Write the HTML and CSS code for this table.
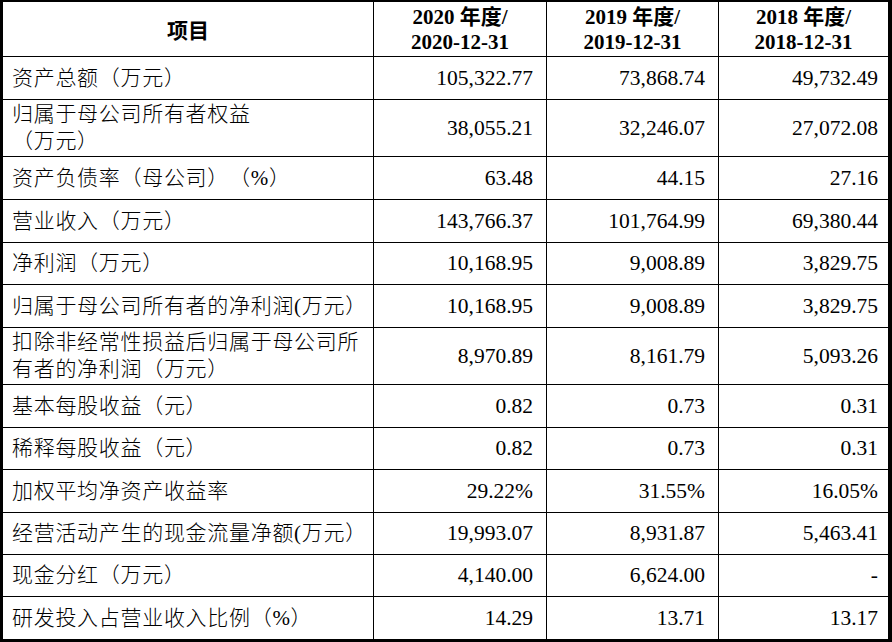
FILE: index.html
```html
<!DOCTYPE html>
<html lang="zh-CN">
<head>
<meta charset="utf-8">
<title>主要财务数据</title>
<link rel="stylesheet" href="styles.css">
</head>
<body>
<div class="sheet">
  <div class="cell head item">项目</div>
  <div class="cell head year">2020 年度/<br>2020-12-31</div>
  <div class="cell head year">2019 年度/<br>2019-12-31</div>
  <div class="cell head year">2018 年度/<br>2018-12-31</div>

  <div class="cell label">资产总额（万元）</div>
  <div class="cell num">105,322.77</div>
  <div class="cell num">73,868.74</div>
  <div class="cell num last">49,732.49</div>

  <div class="cell label">归属于母公司所有者权益<br>（万元）</div>
  <div class="cell num">38,055.21</div>
  <div class="cell num">32,246.07</div>
  <div class="cell num last">27,072.08</div>

  <div class="cell label">资产负债率（母公司）（%）</div>
  <div class="cell num">63.48</div>
  <div class="cell num">44.15</div>
  <div class="cell num last">27.16</div>

  <div class="cell label">营业收入（万元）</div>
  <div class="cell num">143,766.37</div>
  <div class="cell num">101,764.99</div>
  <div class="cell num last">69,380.44</div>

  <div class="cell label">净利润（万元）</div>
  <div class="cell num">10,168.95</div>
  <div class="cell num">9,008.89</div>
  <div class="cell num last">3,829.75</div>

  <div class="cell label">归属于母公司所有者的净利润(万元）</div>
  <div class="cell num">10,168.95</div>
  <div class="cell num">9,008.89</div>
  <div class="cell num last">3,829.75</div>

  <div class="cell label">扣除非经常性损益后归属于母公司所<br>有者的净利润（万元）</div>
  <div class="cell num">8,970.89</div>
  <div class="cell num">8,161.79</div>
  <div class="cell num last">5,093.26</div>

  <div class="cell label">基本每股收益（元）</div>
  <div class="cell num">0.82</div>
  <div class="cell num">0.73</div>
  <div class="cell num last">0.31</div>

  <div class="cell label">稀释每股收益（元）</div>
  <div class="cell num">0.82</div>
  <div class="cell num">0.73</div>
  <div class="cell num last">0.31</div>

  <div class="cell label">加权平均净资产收益率</div>
  <div class="cell num">29.22%</div>
  <div class="cell num">31.55%</div>
  <div class="cell num last">16.05%</div>

  <div class="cell label">经营活动产生的现金流量净额(万元）</div>
  <div class="cell num">19,993.07</div>
  <div class="cell num">8,931.87</div>
  <div class="cell num last">5,463.41</div>

  <div class="cell label">现金分红（万元）</div>
  <div class="cell num">4,140.00</div>
  <div class="cell num">6,624.00</div>
  <div class="cell num last">-</div>

  <div class="cell label">研发投入占营业收入比例（%）</div>
  <div class="cell num">14.29</div>
  <div class="cell num">13.71</div>
  <div class="cell num last">13.17</div>
</div>
</body>
</html>
```

FILE: styles.css
```css
html, body {
  margin: 0;
  padding: 0;
  background: #ffffff;
}

.sheet {
  width: 892px;
  height: 642px;
  box-sizing: border-box;
  border-style: solid;
  border-color: #000;
  border-width: 2px 4px 3px 3px;
  background: #000;
  display: grid;
  grid-template-columns: 370px 172px 171px 169px;
  grid-template-rows: 54px 42px 56px 42px 42px 41px 42px 56px 42px 41px 42px 41px 41px 42px;
  gap: 1px;
  font-family: "Liberation Serif", "Noto Sans CJK SC", serif;
  color: #000;
  text-spacing-trim: space-all;
}

.cell {
  background: #fff;
  display: flex;
  align-items: center;
  white-space: nowrap;
  overflow: hidden;
}

.head {
  justify-content: center;
  text-align: center;
  font-weight: bold;
  font-size: 21px;
  line-height: 25px;
}

.item {
  font-family: "Noto Sans CJK SC", sans-serif;
  font-size: 21px;
}

.year {
  padding-top: 2px;
}

.label {
  padding-left: 9px;
  font-size: 21px;
  letter-spacing: 0.7px;
  line-height: 27px;
  font-weight: 300;
}

.num {
  justify-content: flex-end;
  padding-right: 13px;
  font-size: 21.5px;
}

.num.last {
  padding-right: 10px;
}
```
